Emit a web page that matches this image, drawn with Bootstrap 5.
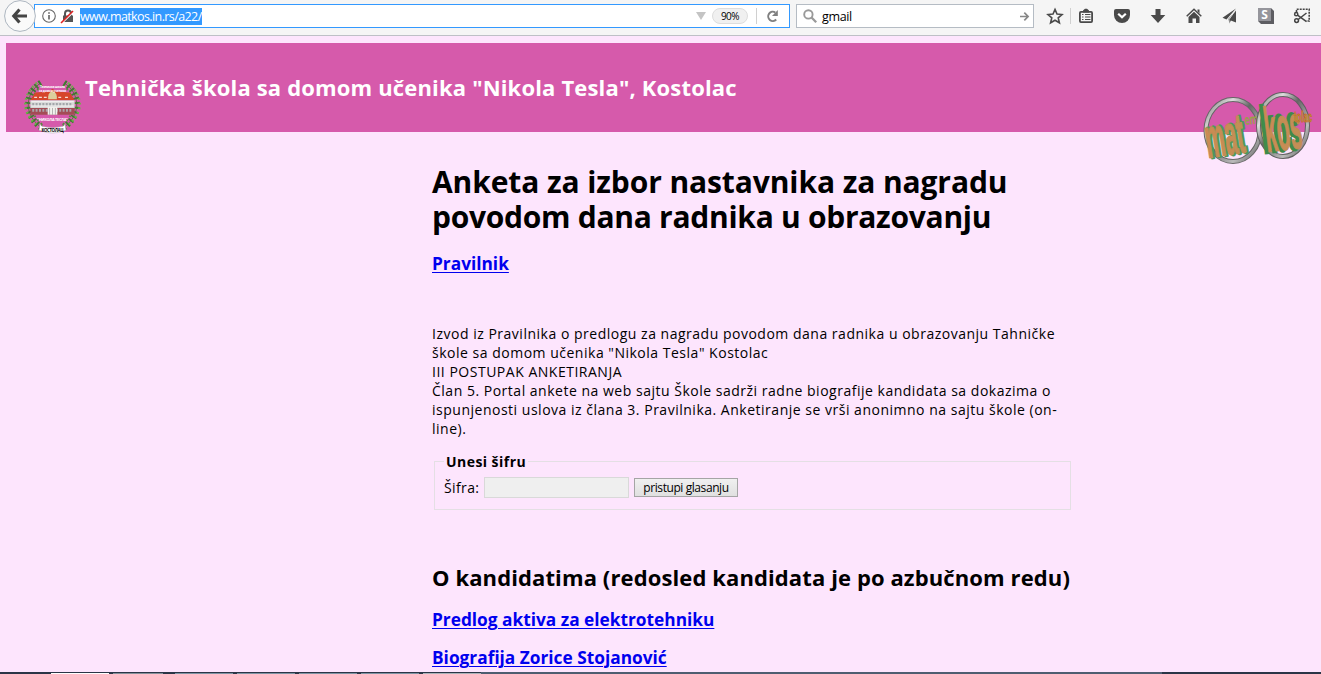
<!DOCTYPE html>
<html lang="sr">
<head>
<meta charset="utf-8">
<title>Anketa za izbor nastavnika</title>
<link rel="stylesheet" href="https://cdn.jsdelivr.net/npm/bootstrap@5.3.0/dist/css/bootstrap.min.css">
<style>
  body { background:#fde5fd; color:#000; font-family:"Open Sans","Noto Sans",sans-serif; height:674px; overflow:hidden; }
  svg { display:block; flex:none; overflow:visible; }
  .toolbar { height:36px; background:#f5f5f5; border-bottom:1px solid #bec0c6; position:relative; font-size:12.5px; flex:none; }
  .urlbox { width:756px; height:24px; margin:4px 0 0 34px; background:#fff; border:1px solid #3399ff; padding-left:7px; }
  .backbtn { left:4px; top:0; }
  .address { background:#3399ff; color:#fff; height:17px; line-height:17px; letter-spacing:-.6px; width:122px; margin-left:5px; white-space:nowrap; }
  .zoomlevel { width:36px; height:16px; border:1px solid #ddd; border-radius:8px; background:#f0f0f0; font-size:10px; line-height:14px; letter-spacing:-.5px; margin-left:6px; }
  .divider { width:1px; height:16px; background:#d0d0d0; }
  .searchbox { width:238px; height:24px; margin:4px 0 0 6px; background:#fff; border:1px solid #b5bcc4; padding:0 4px 0 6px; }
  .query { letter-spacing:-.35px; margin:2px 0 0 5px; line-height:20px; }
  .tools { margin:8px 0 0 13px; }
  .toolset { margin-left:7px; gap:20px; }
  .banner { height:89px; margin:7px 0 0 6px; background:#d65aab; position:relative; flex:none; }
  .banner-title { font-size:22px; font-weight:700; color:#fff; letter-spacing:.165px; line-height:30px; padding:29px 0 0 79px; white-space:nowrap; }
  .crest { left:18px; top:37px; }
  .matkos { left:1196px; top:47px; }
  .content { margin-left:432px; width:639px; flex:none; }
  h1 { font-size:30px; font-weight:700; line-height:35px; letter-spacing:-.1px; margin:32px 0 0; white-space:nowrap; }
  .second-line { letter-spacing:-.28px; }
  .content a { color:#0000ee; font-size:17.3px; font-weight:700; line-height:24px; text-decoration-thickness:1px; text-underline-offset:2px; }
  .excerpt { font-size:14px; line-height:19px; letter-spacing:.51px; margin:48px 0 0; white-space:nowrap; }
  fieldset { margin:14px 0 0 2px; width:637px; height:58px; border:1px solid #e4dfe4; font-size:14px; }
  legend { float:none; width:auto; margin:0 0 0 9px; padding:0 2px; font-size:14px; font-weight:700; line-height:19px; letter-spacing:.45px; background:#fde5fd; }
  .coderow { margin:6px 0 0 9px; height:21px; }
  .codelabel { width:40px; letter-spacing:.38px; line-height:19px; }
  .codeinput { width:145px; height:21px; background:#efefef; border:1px solid #d9d9d9; padding:0 4px; border-radius:0; }
  .codebtn { width:104px; height:19px; margin-left:5px; background:linear-gradient(#f0f0f0,#e0e0e0); border:1px solid #a5a5a5; padding:0; font-size:12px; line-height:16px; letter-spacing:-.42px; text-align:center; color:#000; white-space:nowrap; }
  h2 { font-size:22px; font-weight:700; line-height:30px; letter-spacing:.11px; margin:52px 0 0; white-space:nowrap; }
  .taskbar { left:0; top:672px; width:1321px; height:2px; background:#2b3546; }
  .task { height:1px; margin-top:1px; width:58px; margin-left:4px; background:#7d94a3; }
  .desk { width:681px; background:#4e5d70; }
</style>
</head>
<body class="d-flex flex-column">
<div class="toolbar d-flex align-items-start">
  <div class="urlbox d-flex align-items-center">
    <svg width="14" height="14" viewBox="0 0 14 14"><circle cx="7" cy="7" r="6.3" fill="none" stroke="#666" stroke-width="1.1"/><path d="M7 6v4.500M7 3.200v1.600" stroke="#555" stroke-width="1.500"/></svg>
    <svg class="ms-1" width="15" height="15" viewBox="0 0 15 15"><path d="M3 6.500h10V13H3z" fill="#555"/><path d="M5 7V4.500a3 3 0 0 1 6 0V7" fill="none" stroke="#555" stroke-width="2"/><path d="M1.500 14.500 14 2.500" stroke="#fff" stroke-width="1.500"/><path d="M1 14 13 2" stroke="#d22" stroke-width="1.600"/></svg>
    <div class="address">www.matkos.in.rs/a22/</div>
    <svg class="ms-auto" width="10" height="8" viewBox="0 0 10 8"><path d="M0 0h10L5 8z" fill="#c4c4c4"/></svg>
    <div class="zoomlevel text-center">90%</div>
    <div class="divider ms-2"></div>
    <svg style="margin:0 10px 0 9px" width="13" height="13" viewBox="0 0 13 13"><path d="M9.300 2.500A4.600 4.600 0 1 0 10.200 9.500" fill="none" stroke="#808080" stroke-width="2"/><path d="M11.800 0v6H6z" fill="#808080"/></svg>
  </div>
  <svg class="backbtn position-absolute" width="32" height="32" viewBox="0 0 32 32"><circle cx="16" cy="16" r="15.400" fill="#fafafa" stroke="#adb6c0"/><path d="M15.500 9.500 9.800 16l5.700 6.500M10.500 16H23" fill="none" stroke="#444" stroke-width="3.200"/></svg>
  <div class="searchbox d-flex align-items-center">
    <svg width="14" height="14" viewBox="0 0 14 14"><circle cx="5.400" cy="5.400" r="4.200" fill="none" stroke="#999" stroke-width="1.900"/><path d="m8.500 8.500 4.700 4.700" stroke="#999" stroke-width="2.300"/></svg>
    <div class="query">gmail</div>
    <svg class="ms-auto" width="9" height="9" viewBox="0 0 9 9"><path d="M0 4.500h8M4.300.7l3.800 3.800-3.800 3.800" fill="none" stroke="#888" stroke-width="1.700"/></svg>
  </div>
  <div class="tools d-flex">
    <svg width="16" height="16" viewBox="0 0 16 16"><path d="m8 1.400 2 4.600 5 .5-3.800 3.300 1.200 5L8 12.200l-4.400 2.600 1.200-5L1 6.500 6 6z" fill="none" stroke="#4a4a4a" stroke-width="1.600"/></svg>
    <div class="divider" style="margin-left:7px"></div>
    <div class="toolset d-flex">
    <svg width="16" height="16" viewBox="0 0 16 16"><rect x="1.900" y="3.900" width="12.200" height="10.200" rx="1" fill="#f5f5f5" stroke="#4a4a4a" stroke-width="1.800"/><path d="M5 4.500V2.500l2-1.700h2l2 1.700v2z" fill="#4a4a4a"/><path d="M4 6.500h1.500M7 6.500h5.500M4 9h1.500M7 9h5.500M4 11.500h1.500M7 11.500h5.500" stroke="#4a4a4a" stroke-width="1.100"/></svg>
    <svg width="16" height="16" viewBox="0 0 16 16"><path d="M2 1h12q2 0 2 2v4a8 8 0 0 1-16 0V3q0-2 2-2z" fill="#4a4a4a"/><path d="m4.200 5.700 3.800 3.600 3.800-3.600" fill="none" stroke="#fff" stroke-width="2.200"/></svg>
    <svg width="16" height="16" viewBox="0 0 16 16"><path d="M5.500 1h5v6h4.800L8 15 .7 7h4.800z" fill="#4a4a4a"/></svg>
    <svg width="16" height="16" viewBox="0 0 16 16"><path d="m.7 8.300 7.300-7 7.300 7" fill="none" stroke="#4a4a4a" stroke-width="1.500"/><path d="m2.500 9 5.500-5.200L13.500 9v6H10v-4.500H6.500V15h-4zM11.500 1.500h2v4l-2-2z" fill="#4a4a4a"/></svg>
    <svg width="16" height="16" viewBox="0 0 16 16"><path d="M14 .5.500 9.800l4 1.600zM14 2.500 6.300 11l1.200 4.500 1.300-3L14 14.500z" fill="#4a4a4a"/><path d="m13 3-6 8.500v4" fill="none" stroke="#f5f5f5" stroke-width=".8"/></svg>
    <svg width="16" height="16" viewBox="0 0 16 16"><path d="M0 0h13l3 3v13H3l-3-3z" fill="#5d5d62"/><path d="M0 0h13v13H0z" fill="#95959b"/><text x="6.500" y="10.800" text-anchor="middle" font-size="12" font-weight="700" fill="#fff">S</text></svg>
    <svg width="16" height="16" viewBox="0 0 16 16"><path d="M2.500 4V1.200H15.200V13h-3" fill="none" stroke="#444" stroke-width="1.600" stroke-dasharray="2 1"/><g fill="none" stroke="#444" stroke-width="1.500"><circle cx="2.200" cy="6.200" r="1.600"/><circle cx="2.600" cy="12.600" r="1.900"/><path d="m3.500 7.200 9 6.500M4.200 11.500 12.500 5"/></g></svg>
    </div>
  </div>
</div>

<header class="banner">
  <div class="banner-title">Tehnička škola sa domom učenika "Nikola Tesla", Kostolac</div>
  <svg class="crest position-absolute" width="57" height="54" viewBox="0 0 58 56">
    <g fill="none" stroke="#4b7a37" stroke-width=".9"><path d="M17 3C1 13-2 35 17 49"/><path d="M41 3c16 10 19 32 0 46"/></g>
    <g fill="none">
      <path d="M17 3C1 13-2 35 17 49M41 3c16 10 19 32 0 46" stroke="#3f7a31" stroke-width="6.500" stroke-dasharray="2 2.900"/>
      <path d="M13 3C-2 15-4 33 12 46M45 3c15 12 17 30 1 43" stroke="#69b447" stroke-width="2.600" stroke-dasharray="1.800 3.100"/>
      <path d="M18 6C5 16 3 33 18 46M40 6c13 10 15 27 0 40" stroke="#4f9238" stroke-width="2" stroke-dasharray="1.600 3.400"/>
    </g>
    <path d="m11 13-5 8h46l-5-8-14-1-4-3-4 3z" fill="#d6452b"/>
    <path d="M24.500 17q1-5 4.500-5t4.500 5v3h-9z" fill="#dccf9c"/>
    <path d="M10 18h3m2 0h3m2 0h3m12 0h3m4 0h3" stroke="#f6ddd4" stroke-width="1.500"/>
    <path d="M6 21h46v8H6z" fill="#d7d7d7"/><path d="M6 29h46v7H6z" fill="#a34c55"/>
    <path d="M7 22.500h44M7 27h44" stroke="#f7f7f7"/><path d="M8 25h42" stroke="#a2a6aa" stroke-width="2.500" stroke-dasharray="2 1.500"/><path d="M8 31.500h42" stroke="#a9a4aa" stroke-width="3" stroke-dasharray="2 1.500"/>
    <path d="M24 28h10v8H24z" fill="#f2f2ee"/><path d="M26 29v7M29 29v7M32 29v7" stroke="#888" stroke-width=".6"/>
    <g fill="#fff" font-weight="700" text-anchor="middle"><text x="29" y="8.500" font-size="3.400" textLength="26">Техничка школа</text><text x="29" y="12" textLength="28" font-size="3">са домом ученика</text><text x="29" y="42" textLength="32" font-size="4">"НИКОЛА ТЕСЛА"</text></g>
    <path d="m16 46 2 2q11 3 22 0l2-2 1 6-3 1q-11 4-22 0l-3-1z" fill="#fff" stroke="#aaa" stroke-width=".5"/>
    <text x="29" y="53.500" text-anchor="middle" font-size="4.500" font-weight="700" textLength="23">КОСТОЛАЦ</text>
  </svg>
  <svg class="matkos position-absolute" width="114" height="76" viewBox="0 0 114 76">
    <defs><linearGradient id="steel" x2="1" y2="1"><stop offset="0" stop-color="#777"/><stop offset=".25" stop-color="#ddd"/><stop offset=".45" stop-color="#666"/><stop offset=".75" stop-color="#bbb"/><stop offset="1" stop-color="#555"/></linearGradient>
    <linearGradient id="bronze" x2="1"><stop offset="0" stop-color="#cb8b52"/><stop offset="1" stop-color="#c28f57"/></linearGradient></defs>
    <g fill="none"><ellipse cx="31" cy="40.500" rx="27" ry="31" stroke="#666" stroke-width="5"/><ellipse cx="31" cy="40.500" rx="27" ry="31" stroke="url(#steel)" stroke-width="3"/></g>
    <text transform="translate(43 35) rotate(-6) scale(.62 1)" font-weight="700" font-size="14" fill="#96a04a">ema</text>
    <g font-family="Liberation Sans, sans-serif" font-weight="700" stroke-linejoin="round">
      <text transform="translate(8 68) rotate(-9) scale(.65 1.650)" font-size="34" fill="#4c9853" stroke="#4f9a58" stroke-width="2" textLength="60" lengthAdjust="spacingAndGlyphs">mat</text>
      <text transform="translate(6 68) rotate(-9) scale(.65 1.650)" font-size="34" fill="url(#bronze)" stroke="#c28b55" stroke-width=".8" textLength="60" lengthAdjust="spacingAndGlyphs">mat</text>
    </g>
    <g fill="none"><ellipse cx="81" cy="35.500" rx="24.500" ry="31" stroke="#606060" stroke-width="5"/><ellipse cx="81" cy="35.500" rx="24.500" ry="31" stroke="url(#steel)" stroke-width="3"/></g>
    <g font-family="Liberation Sans, sans-serif" font-weight="700">
      <text transform="translate(62 62) rotate(-7) scale(.62 1.700)" font-size="37" fill="#3d914b" stroke="#3f8a4b" stroke-width="3" textLength="60" lengthAdjust="spacingAndGlyphs">kos</text>
      <text transform="translate(65 62) rotate(-7) scale(.62 1.700)" font-size="37" fill="url(#bronze)" stroke="#c28b55" stroke-width=".8" textLength="60" lengthAdjust="spacingAndGlyphs">kos</text>
      <text transform="translate(92 32) scale(.6 1)" font-size="15" fill="#a4a444" stroke="#cc6928" stroke-width=".8" textLength="30" lengthAdjust="spacingAndGlyphs">tolac</text>
    </g>
  </svg>
</header>

<main class="content">
  <h1>Anketa za izbor nastavnika za nagradu <br><span class="second-line">povodom dana radnika u obrazovanju</span></h1>
  <div style="margin-top:18px"><a href="#">Pravilnik</a></div>
  <p class="excerpt">Izvod iz Pravilnika o predlogu za nagradu povodom dana radnika u obrazovanju Tahničke<br>škole sa domom učenika "Nikola Tesla" Kostolac<br>III POSTUPAK ANKETIRANJA<br>Član 5. Portal ankete na web sajtu Škole sadrži radne biografije kandidata sa dokazima o<br>ispunjenosti uslova iz člana 3. Pravilnika. Anketiranje se vrši anonimno na sajtu škole (on-<br>line).</p>
  <fieldset>
    <legend>Unesi šifru</legend>
    <div class="coderow d-flex align-items-center">
      <label class="codelabel" for="code">Šifra:</label>
      <input class="codeinput" id="code" type="text">
      <button class="codebtn" type="button">pristupi glasanju</button>
    </div>
  </fieldset>
  <h2>O kandidatima (redosled kandidata je po azbučnom redu)</h2>
  <div style="margin-top:16px"><a href="#">Predlog aktiva za elektrotehniku</a></div>
  <div style="margin-top:14px"><a href="#">Biografija Zorice Stojanović</a></div>
</main>
<div class="taskbar position-absolute d-flex">
  <div class="task" style="width:58px;margin-left:51px;background:#fff"></div>
  <div class="task" style="width:50px;background:#84919a"></div>
  <div class="task" style="margin-left:12px"></div>
  <div class="task"></div>
  <div class="task"></div>
  <div class="task"></div>
  <div class="task" style="background:#a9b2b8"></div>
  <div class="desk"></div>
</div>
<script src="https://cdn.jsdelivr.net/npm/bootstrap@5.3.0/dist/js/bootstrap.bundle.min.js"></script>
</body>
</html>
